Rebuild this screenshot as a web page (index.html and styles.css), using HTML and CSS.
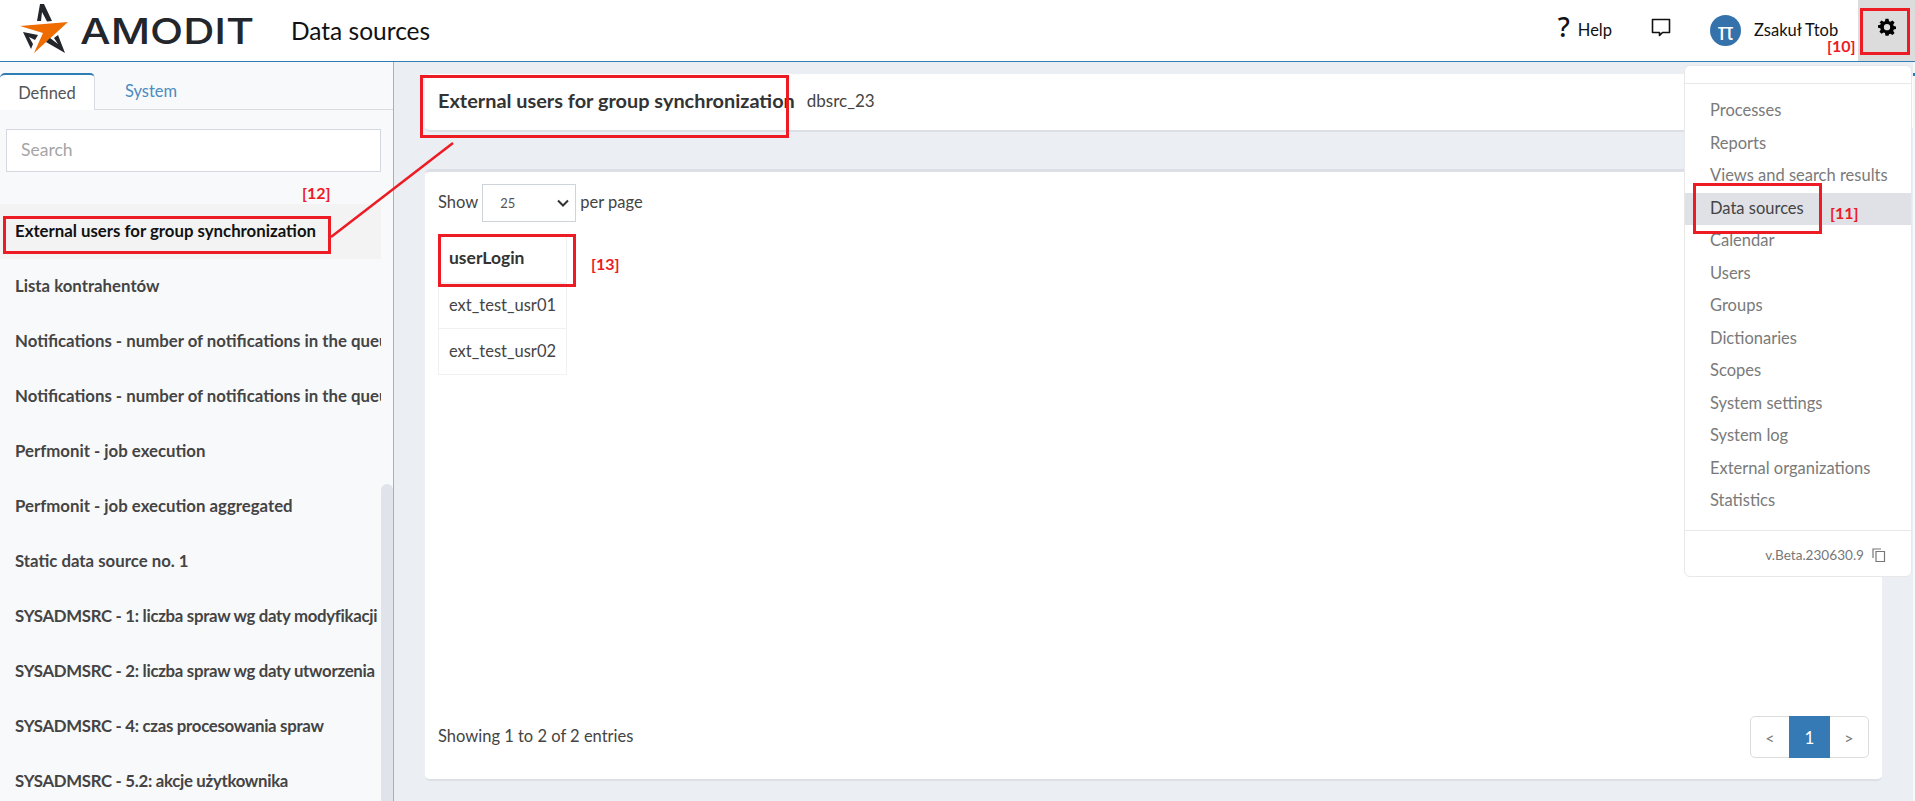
FILE: index.html
```html
<!DOCTYPE html>
<html lang="en">
<head>
<meta charset="utf-8">
<title>Data sources</title>
<link rel="stylesheet" href="styles.css">
</head>
<body>
<header class="topbar">
  <div class="logo">
    <svg class="logo-star" viewBox="20 2 50 57" width="50" height="57">
      <path fill="#ee6c00" d="M20 26 68 22 34 53 43 33Z"/>
      <path fill="#23262b" d="M37 21 40 4 44 4 52 21 47 21.500 42 12 41 21Z"/>
      <path fill="#23262b" d="M23 32 38 35 35 40 29 37 33 44 31 49Z"/>
      <path fill="#23262b" d="M58 35 65 53 46 42 50 38 58 44 54 38Z"/>
    </svg>
    <span class="logo-text">AMODIT</span>
  </div>
  <h1 class="page-title">Data sources</h1>
  <div class="top-actions">
    <div class="help"><span class="help-q">?</span><span>Help</span></div>
    <svg class="chat" viewBox="0 0 20 20" width="20" height="20"><path fill="none" stroke="#111" stroke-width="1.600" stroke-linejoin="round" d="M1.500 1.500h17v13h-7l-3 3v-3h-7z"/></svg>
    <div class="user"><span class="avatar">π</span><span class="user-name">Zsakuł Ttob</span></div>
    <div class="gear">
      <svg viewBox="0 0 24 24" width="18" height="18"><path fill="#000" fill-rule="evenodd" d="M10 1h4l.7 3.200 1.800.8 2.800-1.800 2.800 2.800L20.300 8.800l.7 1.800 3 .7v3.400l-3 .7-.7 1.800 1.800 2.800-2.800 2.800-2.800-1.800-1.800.7L14 23.500h-4l-.7-3.500-1.800-.7-2.800 1.800-2.800-2.800 1.800-2.800-.7-1.800-3-.7v-3.400l3-.7.7-1.800L1.900 6l2.800-2.800L7.500 5l1.800-.8zM12 8a4.200 4.200 0 1 0 0 8.400A4.200 4.200 0 0 0 12 8z"/></svg>
    </div>
  </div>
</header>

<div class="layout">
  <aside class="sidebar">
    <nav class="tabs">
      <span class="tab tab-active">Defined</span>
      <span class="tab">System</span>
    </nav>
    <div class="search-wrap"><div class="search">Search</div></div>
    <div class="list-wrap">
      <ul class="list">
        <li class="row row-active">External users for group synchronization</li>
        <li class="row">Lista kontrahentów</li>
        <li class="row">Notifications - number of notifications in the queue</li>
        <li class="row">Notifications - number of notifications in the queue</li>
        <li class="row">Perfmonit - job execution</li>
        <li class="row">Perfmonit - job execution aggregated</li>
        <li class="row">Static data source no. 1</li>
        <li class="row row-tight">SYSADMSRC - 1: liczba spraw wg daty modyfikacji</li>
        <li class="row row-tight">SYSADMSRC - 2: liczba spraw wg daty utworzenia</li>
        <li class="row row-tight">SYSADMSRC - 4: czas procesowania spraw</li>
        <li class="row row-tight">SYSADMSRC - 5.2: akcje użytkownika</li>
      </ul>
      <div class="track"><div class="thumb"></div></div>
    </div>
  </aside>

  <main class="main">
    <section class="title-card">
      <strong class="source-name">External users for group synchronization</strong>
      <span class="source-id">dbsrc_23</span>
    </section>
    <section class="data-card">
      <div class="per-page">
        <span>Show</span>
        <div class="select"><span>25</span>
          <svg viewBox="0 0 12 8" width="12" height="8"><path fill="none" stroke="#333" stroke-width="2" d="M1 1.500l5 5 5-5"/></svg>
        </div>
        <span>per page</span>
      </div>
      <table class="grid">
        <thead><tr><th>userLogin</th></tr></thead>
        <tbody>
          <tr><td>ext_test_usr01</td></tr>
          <tr><td>ext_test_usr02</td></tr>
        </tbody>
      </table>
      <div class="card-foot">
        <span class="entries">Showing 1 to 2 of 2 entries</span>
        <div class="pager"><span class="page">&lt;</span><span class="page page-on">1</span><span class="page">&gt;</span></div>
      </div>
    </section>
  </main>
</div>

<div class="menu">
  <div class="menu-head"></div>
  <ul class="menu-list">
    <li>Processes</li>
    <li>Reports</li>
    <li>Views and search results</li>
    <li class="menu-on">Data sources</li>
    <li>Calendar</li>
    <li>Users</li>
    <li>Groups</li>
    <li>Dictionaries</li>
    <li>Scopes</li>
    <li>System settings</li>
    <li>System log</li>
    <li>External organizations</li>
    <li>Statistics</li>
  </ul>
  <div class="menu-foot"><span>v.Beta.230630.9</span>
    <svg viewBox="0 0 14 14" width="14" height="14"><path fill="none" stroke="#777" stroke-width="1.200" d="M1 10V1h8M4 3.500h8.500v10H4z"/></svg>
  </div>
</div>

<div class="mark mark-gear"></div>
<div class="mark mark-title"></div>
<div class="mark mark-row"></div>
<div class="mark mark-menu"></div>
<div class="mark mark-col"></div>
<span class="tag tag-10">[10]</span>
<span class="tag tag-11">[11]</span>
<span class="tag tag-12">[12]</span>
<span class="tag tag-13">[13]</span>
<svg class="connector" viewBox="0 0 130 100" width="130" height="100"><path stroke="#ed1c24" stroke-width="2.500" d="M123 2 1 96"/></svg>
</body>
</html>
```
FILE: styles.css
```css
* { box-sizing: border-box; }
html, body { margin: 0; height: 100%; overflow: hidden; }
body {
  font-family: "Lato", "Noto Sans", sans-serif;
  font-size: 16.500px;
  color: #333;
  background: #fff;
  display: flex;
  flex-direction: column;
}
ul { list-style: none; margin: 0; padding: 0; }

.topbar {
  height: 62px;
  flex: none;
  display: flex;
  align-items: center;
  background: #fff;
  border-bottom: 1px solid #2e7db5;
}
.logo { display: flex; align-items: center; margin-left: 20px; width: 271px; }
.logo-star { flex: none; }
.logo-text {
  font-family: "Inter", sans-serif;
  font-weight: 500;
  font-size: 36px;
  line-height: 40px;
  color: #23262b;
  margin-left: 10px;
  transform: scaleX(1.200);
  transform-origin: left center;
}
.page-title { margin: 0; font-size: 24.500px; font-weight: 400; color: #111; }
.top-actions { margin-left: auto; display: flex; align-items: center; height: 100%; color: #111; }
.help { display: flex; align-items: center; gap: 8px; margin-right: 39px; margin-top: -2px; }
.help-q { font-family: "Noto Sans", sans-serif; font-weight: 500; font-size: 27px; line-height: 27px; margin-top: -6px; }
.chat { margin-right: 39px; margin-top: -6px; }
.user { display: flex; align-items: center; gap: 13px; width: 148px; }
.avatar {
  width: 31px; height: 31px; border-radius: 50%;
  background: #3572ab; color: #fff;
  display: flex; align-items: center; justify-content: center;
  font-family: "Noto Sans", sans-serif; font-size: 24px;
}
.user-name { margin-top: -2px; }
.gear {
  width: 57px; height: 100%;
  background: #dcdcdc;
  display: flex; justify-content: center; padding-top: 18px;
}

.layout { flex: 1; min-height: 0; display: flex; }

.sidebar {
  width: 394px; flex: none;
  background: #f8f9fb;
  border-right: 1px solid #a9afb8;
  display: flex; flex-direction: column;
}
.tabs { display: flex; height: 48px; padding-top: 11px; border-bottom: 1px solid #d9dce2; }
.tab { width: 95px; height: 36px; display: flex; align-items: center; justify-content: center; color: #4a8cc0; }
.tab + .tab { width: 116px; padding-right: 4px; }
.tab-active {
  background: #fff; color: #555;
  border-top: 2px solid #2e7db5;
  border-right: 1px solid #d9dce2;
  border-radius: 5px 5px 0 0;
  height: 37px;
}
.search-wrap { padding: 19px 12px 0 6px; }
.search {
  height: 43px;
  background: #fff;
  border: 1px solid #d5d8de;
  padding: 0 0 2px 14px;
  display: flex; align-items: center;
  color: #a5a5a5; font-size: 17.500px;
}
.list-wrap { flex: 1; min-height: 0; display: flex; margin-top: 32px; overflow: hidden; }
.list { flex: 1; min-width: 0; overflow: hidden; }
.row {
  height: 55px;
  padding: 0 0 2px 15px;
  display: flex; align-items: center;
  white-space: nowrap;
  overflow: hidden;
  font-weight: 700;
  font-size: 16.800px;
  color: #444;
}
.row-tight { letter-spacing: -0.3px; }
.row-active { background: #f3f3f3; color: #111; }
.track { width: 12px; flex: none; padding-top: 280px; }
.thumb { height: 100%; background: #e0e3ea; border-radius: 6px 6px 0 0; }

.main {
  flex: 1; min-width: 0;
  position: relative;
  background: #ebeef3;
  padding: 12px 31px 20px 31px;
  border-right: 2px solid #f7f8fa;
  display: flex; flex-direction: column; gap: 37px;
}
.main::after {
  content: "";
  position: absolute; right: -2px; top: 11px;
  width: 2px; height: 3px;
  background: #2e7db5;
}
.title-card {
  height: 58px; flex: none;
  background: #fff;
  border-bottom: 2px solid #dcdfe5;
  border-radius: 5px;
  margin-right: -31px;
  display: flex; align-items: center; gap: 12px;
  padding: 0 0 4px 13px;
}
.source-name { font-size: 19.900px; color: #333; font-weight: 700; }
.source-id { font-size: 17px; color: #444; }
.data-card {
  flex: 1; min-height: 0;
  background: #fff;
  border-top: 3px solid #dcdfe5;
  border-bottom: 2px solid #dcdfe5;
  border-radius: 5px;
  padding: 12px 13px 21px;
  display: flex; flex-direction: column;
}
.per-page { display: flex; align-items: center; gap: 4px; height: 38px; color: #444; }
.per-page > span { margin-top: -3px; }
.select {
  width: 94px; height: 38px;
  border: 1px solid #cfd3da;
  display: flex; align-items: center; justify-content: space-between;
  padding: 0 6px 0 17px;
  font-size: 13px; color: #555;
}
.grid { border-collapse: collapse; margin-top: 12px; width: 129px; }
.grid th, .grid td { border: 1px solid #f0f1f3; padding: 0 10px 2px; text-align: left; white-space: nowrap; }
.grid th { height: 48px; font-weight: 700; color: #333; border-bottom-width: 2px; font-size: 17.500px; }
.grid td { height: 46px; color: #444; }
.card-foot { margin-top: auto; display: flex; align-items: center; justify-content: space-between; color: #444; }
.entries { padding-bottom: 3px; }
.pager { display: flex; height: 42px; border: 1px solid #dcdcdc; border-radius: 5px; }
.page { width: 38px; display: flex; align-items: center; justify-content: center; color: #777; font-size: 16px; }
.page-on { width: 41px; background: #3579b5; color: #fff; margin: -1px 0; font-size: 17px; }

.menu {
  position: absolute; left: 1684px; top: 65px; width: 228px; height: 512px;
  background: #fff;
  border: 1px solid #e8e8e8;
  border-radius: 6px;
  display: flex; flex-direction: column;
}
.menu-head { height: 18px; border-bottom: 1px solid #e8e8e8; flex: none; }
.menu-list { padding-top: 11px; }
.menu-list li {
  height: 32.500px;
  display: flex; align-items: center;
  padding: 0 0 2px 25px;
  color: #7a7a7a;
}
.menu-list .menu-on { background: #e0e1e6; color: #444; }
.menu-foot {
  margin-top: 12px;
  border-top: 1px solid #e8e8e8;
  flex: 1;
  display: flex; align-items: center; justify-content: flex-end; gap: 8px;
  padding: 4px 25px 0 0;
  font-size: 13.600px; color: #777;
}

.mark { position: absolute; border: 3px solid #ed1c24; }
.mark-gear { left: 1860px; top: 8px; width: 50px; height: 47px; }
.mark-title { left: 420px; top: 75px; width: 369px; height: 63px; }
.mark-row { left: 3px; top: 216px; width: 328px; height: 38px; }
.mark-menu { left: 1693px; top: 183px; width: 129px; height: 51px; }
.mark-col { left: 438px; top: 234px; width: 138px; height: 53px; }
.tag { position: absolute; color: #ed1c24; font-size: 16px; font-weight: 700; line-height: 18px; }
.tag-10 { left: 1827px; top: 37px; }
.tag-11 { left: 1830px; top: 204px; }
.tag-12 { left: 302px; top: 184px; }
.tag-13 { left: 591px; top: 255px; }
.connector { position: absolute; left: 330px; top: 141px; }
```
